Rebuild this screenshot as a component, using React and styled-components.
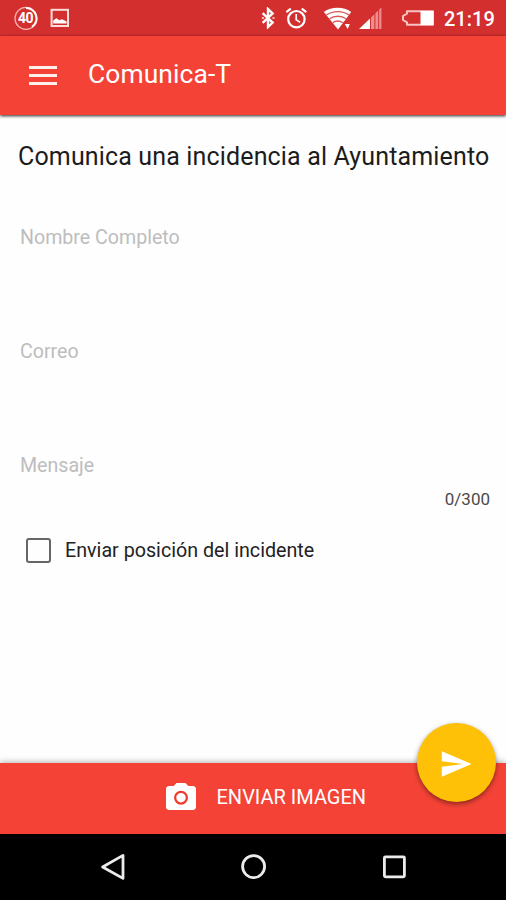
import styled, { createGlobalStyle } from "styled-components";

const App = () => {
  return (
    <Screen>
      <GlobalStyle />
      <StatusBar>
        <CounterIcon />
        <PictureIcon />
        <Spacer />
        <BluetoothIcon />
        <AlarmIcon />
        <WifiIcon />
        <SignalIcon />
        <BatteryIcon />
        <Clock>21:19</Clock>
      </StatusBar>
      <AppBar>
        <MenuButton aria-label="Menu">
          <span />
          <span />
          <span />
        </MenuButton>
        <AppTitle>Comunica-T</AppTitle>
      </AppBar>
      <Form>
        <Heading>Comunica una incidencia al Ayuntamiento</Heading>
        <Field>Nombre Completo</Field>
        <Field>Correo</Field>
        <Field $last>Mensaje</Field>
        <Counter>0/300</Counter>
        <CheckRow>
          <Box />
          <CheckLabel>Enviar posición del incidente</CheckLabel>
        </CheckRow>
      </Form>
      <Footer>
        <ImageButton>
          <svg width="36" height="36" viewBox="0 0 24 24" fill="#fff">
            <path d="M9 2L7.17 4H4c-1.1 0-2 .9-2 2v12c0 1.1.9 2 2 2h16c1.1 0 2-.9 2-2V6c0-1.1-.9-2-2-2h-3.17L15 2H9z" />
            <circle cx="12" cy="11.8" r="3.9" stroke="#f03a2d" strokeWidth="1.5" />
          </svg>
          <span>ENVIAR IMAGEN</span>
        </ImageButton>
        <SendButton aria-label="Enviar">
          <svg width="34" height="34" viewBox="0 0 24 24" fill="#fff">
            <path d="M2.01 21L23 12 2.01 3 2 10l15 2-15 2z" />
          </svg>
        </SendButton>
      </Footer>
      <NavBar>
        <svg width="28" height="30" viewBox="0 0 28 30">
          <path d="M24 3.4v23L3.6 15z" {...navStroke} />
        </svg>
        <svg width="28" height="28" viewBox="0 0 28 28">
          <circle cx="13.6" cy="13.6" r="11" {...navStroke} />
        </svg>
        <svg width="28" height="28" viewBox="0 0 28 28">
          <rect x="4.4" y="3.8" width="20" height="20" rx="1" {...navStroke} />
        </svg>
      </NavBar>
    </Screen>
  );
};

export default App;

const navStroke = {
  fill: "none",
  stroke: "#ececec",
  strokeWidth: 2.8,
  strokeLinejoin: "round",
};

const CounterIcon = () => (
  <StatusIcon width="26" height="26" viewBox="0 0 26 26" $left={13}>
    <circle cx="13" cy="13.4" r="11" fill="none" stroke="#f6b5b3" strokeWidth="1.2" />
    <path d="M13 3a10.4 10.4 0 0 1 6 18.9" fill="none" stroke="#fff" strokeWidth="2" />
    <text x="12.6" y="18" textAnchor="middle" fontSize="14" fontWeight="700" fill="#fff" letterSpacing="-0.5">
      40
    </text>
  </StatusIcon>
);

const PictureIcon = () => (
  <StatusIcon width="20" height="20" viewBox="0 0 20 20" $left={11}>
    <rect x="1.6" y="1.8" width="16.4" height="16.2" fill="none" stroke="#fbdcda" strokeWidth="2" />
    <path d="M3.2 15.6v-3l3.2-2.4 3 2 2.6-1 4.6 2.4v2z" fill="#fff" />
  </StatusIcon>
);

const BluetoothIcon = () => (
  <StatusIcon width="16" height="22" viewBox="0 0 16 22" $left={0}>
    <path
      d="M2.6 6.2l10 9.4L8 20V2l4.6 4.4-10 9.4"
      fill="none"
      stroke="#fff"
      strokeWidth="2.4"
    />
    <path d="M1.8 11H4M12.4 11h2.2" stroke="#f3b5b3" strokeWidth="2.2" />
  </StatusIcon>
);

const AlarmIcon = () => (
  <StatusIcon width="22" height="22" viewBox="0 0 22 22" $left={9}>
    <circle cx="11.4" cy="12.2" r="8.2" fill="none" stroke="#fff" strokeWidth="2.2" />
    <path d="M1.4 5.2l4.4-3.6M21.2 5.2l-4.4-3.6" stroke="#fff" strokeWidth="2.2" />
    <path d="M11.2 7v5.8l4 2.6" fill="none" stroke="#fff" strokeWidth="1.7" />
  </StatusIcon>
);

const WifiIcon = () => (
  <StatusIcon width="30" height="24" viewBox="0 0 30 24" $left={16}>
    <path d="M15 23.6L.8 6C8.6.4 20.4.4 28.2 6z" fill="#fff" />
    <path
      d="M3.4 9C10 4.4 19.4 4.4 26 9M6.6 12.8c4.6-3.4 11.8-3.4 16.4 0M9.8 16.6c2.8-1.8 7-1.8 9.8 0"
      fill="none"
      stroke="#dc5452"
      strokeWidth="1.3"
    />
    <path d="M21 16h8v8h-8z" fill="#d32f2f" />
    <path d="M21.8 18h5l-2.2 5z" fill="#fff" />
  </StatusIcon>
);

const SignalIcon = () => (
  <StatusIcon width="23" height="22" viewBox="0 0 23 22" $left={6}>
    <path d="M0 22l11-10.6V22z" fill="#fff" />
    <path
      d="M12 10.4l3.4-3.2V22H12zM16.4 6.2l2.8-2.8V22h-2.8zM20.2 2.4l2.2-2V22h-2.2z"
      fill="#ea8f8e"
    />
  </StatusIcon>
);

const BatteryIcon = () => (
  <StatusIcon width="34" height="18" viewBox="0 0 34 18" $left={19}>
    <path
      d="M6 2.2h26v13.6H6v-2.4L2 11V7l4-2.4z"
      fill="none"
      stroke="#f7c3c1"
      strokeWidth="2"
      strokeLinejoin="round"
    />
    <path d="M19.5 2h13v14h-13z" fill="#fff" />
  </StatusIcon>
);

const GlobalStyle = createGlobalStyle`
  * {
    box-sizing: border-box;
  }
  body {
    margin: 0;
    font-family: Roboto, "Liberation Sans", sans-serif;
    background: #fefefe;
  }
  button {
    padding: 0;
    border: 0;
    font: inherit;
    background: none;
  }
`;

const Screen = styled.div`
  width: 506px;
  height: 900px;
  display: flex;
  flex-direction: column;
  overflow: hidden;
  background: #fefefe;
`;

const StatusBar = styled.div`
  height: 36px;
  display: flex;
  align-items: center;
  padding-right: 11px;
  background: #d32f2f;
`;

const StatusIcon = styled.svg`
  flex: none;
  margin-left: ${({ $left }) => $left}px;
`;

const Spacer = styled.div`
  flex: 1;
`;

const Clock = styled.div`
  width: 51px;
  margin-left: 9px;
  padding-top: 2px;
  color: #fff;
  font-size: 20px;
  font-weight: 500;
  line-height: 24px;
  white-space: nowrap;
`;

const AppBar = styled.header`
  height: 79px;
  display: flex;
  align-items: center;
  padding-left: 28.5px;
  background: #f44336;
  box-shadow: 0 1px 3px rgba(0, 0, 0, 0.85);
`;

const MenuButton = styled.button`
  width: 28.5px;
  height: 20px;
  display: flex;
  flex-direction: column;
  justify-content: space-between;

  span {
    width: 100%;
    height: 3.4px;
    background: #fff0ee;
  }
`;

const AppTitle = styled.h1`
  margin: -3px 0 0 31px;
  color: #fff;
  font-size: 26.4px;
  font-weight: 400;
  line-height: 32px;
  letter-spacing: 0.1px;
`;

const Form = styled.main`
  flex: 1;
  padding: 26px 16px 0 18px;
`;

const Heading = styled.h2`
  margin: 0;
  color: #1c1c1c;
  font-size: 25px;
  font-weight: 400;
  line-height: 32px;
  letter-spacing: 0.15px;
  white-space: nowrap;
`;

const Field = styled.div`
  height: ${({ $last }) => ($last ? 35 : 114)}px;
  margin-left: 2px;
  color: #bdbdbd;
  font-size: 19.6px;
  line-height: 24px;

  ${Heading} + & {
    margin-top: 53px;
  }
`;

const Counter = styled.div`
  color: #4a4a4a;
  font-size: 17px;
  line-height: 20px;
  text-align: right;
`;

const CheckRow = styled.label`
  display: flex;
  align-items: center;
  margin-top: 29px;
  padding-left: 8px;
`;

const Box = styled.span`
  width: 25px;
  height: 25px;
  border: 2px solid #666;
  border-radius: 3px;
`;

const CheckLabel = styled.span`
  margin-left: 14px;
  padding-top: 1px;
  color: #222;
  font-size: 19.7px;
  line-height: 24px;
`;

const Footer = styled.footer`
  position: relative;
  height: 71px;
  background: #f44336;
  box-shadow: 0 -1px 6px rgba(0, 0, 0, 0.3);
`;

const ImageButton = styled.button`
  height: 69px;
  display: flex;
  align-items: center;
  padding-left: 162.5px;
  color: #fff;
  font-size: 20px;
  white-space: nowrap;

  span {
    margin: -1px 0 0 18px;
  }
`;

// floats over the top edge of the footer
const SendButton = styled.button`
  position: absolute;
  top: -40px;
  right: 10.5px;
  width: 79px;
  height: 79px;
  display: flex;
  align-items: center;
  justify-content: center;
  padding: 3px 1px 0 0;
  border-radius: 50%;
  background: #ffc107;
  box-shadow: 0 2px 5px rgba(0, 0, 0, 0.45);
`;

const NavBar = styled.nav`
  position: relative;
  height: 66px;
  display: flex;
  align-items: center;
  justify-content: space-between;
  padding: 0 98px 0 99px;
  background: #000;
`;
